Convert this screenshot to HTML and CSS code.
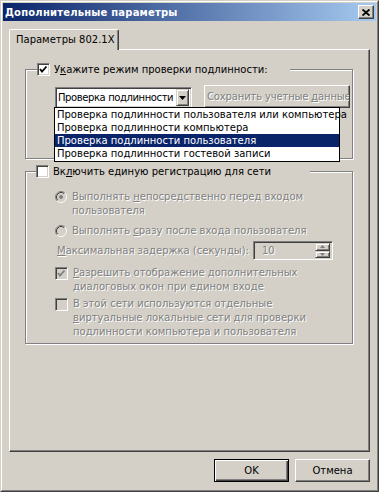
FILE: index.html
```html
<!DOCTYPE html>
<html lang="ru">
<head>
  <meta charset="UTF-8">
  <meta name="viewport" content="width=device-width, initial-scale=1.0">
  <title>Дополнительные параметры</title>
  <link rel="stylesheet" href="styles.css">
</head>
<body>

<div class="window">
  <div class="window-inner">
    <div class="titlebar">
      <span class="title">Дополнительные параметры</span>
      <span class="close-btn">
        <svg width="8" height="7" viewBox="0 0 8 7"><path d="M0.5 0.5L7.5 6.5M7.5 0.5L0.5 6.5" stroke="#000" stroke-width="1.8"/></svg>
      </span>
    </div>

    <div class="tabs">
      <div class="tab active">Параметры 802.1X</div>
    </div>

    <div class="panel">
      <fieldset class="group group-auth">
        <legend class="legend-auth">
          <span class="cb">
            <svg width="9" height="9" viewBox="0 0 9 9"><polyline points="1,4 3,6.5 7.5,1.5" fill="none" stroke="#000" stroke-width="1.8"/></svg>
          </span>
          <span>У<u>к</u>ажите режим проверки подлинности:</span>
        </legend>
        <div class="auth-row">
          <div class="combo">
            <span class="combo-text">Проверка подлинности</span>
            <span class="combo-btn">
              <svg width="7" height="4" viewBox="0 0 7 4"><path d="M0 0H7L3.5 4Z" fill="#000"/></svg>
            </span>
            <ul class="dropdown">
              <li>Проверка подлинности пользователя или компьютера</li>
              <li>Проверка подлинности компьютера</li>
              <li class="selected">Проверка подлинности пользователя</li>
              <li>Проверка подлинности гостевой записи</li>
            </ul>
          </div>
          <span class="btn btn-save disabled"><span>Сохранить учетные <u>д</u>анные</span></span>
        </div>
      </fieldset>

      <fieldset class="group group-sso">
        <legend class="legend-sso">
          <span class="cb"></span>
          <span>Вк<u>л</u>ючить единую регистрацию для сети</span>
        </legend>

        <div class="option opt-radio1 disabled">
          <span class="radio">
            <svg width="12" height="12" viewBox="0 0 12 12">
              <circle cx="6" cy="6" r="5" fill="#d4d0c8"/>
              <path d="M2.11 9.89A5.5 5.5 0 0 1 9.89 2.11" fill="none" stroke="#808080"/>
              <path d="M9.89 2.11A5.5 5.5 0 0 1 2.11 9.89" fill="none" stroke="#fff"/>
              <path d="M2.82 9.18A4.5 4.5 0 0 1 9.18 2.82" fill="none" stroke="#404040"/>
              <path d="M9.18 2.82A4.5 4.5 0 0 1 2.82 9.18" fill="none" stroke="#d4d0c8"/>
              <circle cx="6" cy="6" r="2" fill="#808080"/>
            </svg>
          </span>
          <span class="option-text">Выполнять <u>н</u>епосредственно перед входом<br>пользователя</span>
        </div>

        <div class="option opt-radio2 disabled">
          <span class="radio">
            <svg width="12" height="12" viewBox="0 0 12 12">
              <circle cx="6" cy="6" r="5" fill="#d4d0c8"/>
              <path d="M2.11 9.89A5.5 5.5 0 0 1 9.89 2.11" fill="none" stroke="#808080"/>
              <path d="M9.89 2.11A5.5 5.5 0 0 1 2.11 9.89" fill="none" stroke="#fff"/>
              <path d="M2.82 9.18A4.5 4.5 0 0 1 9.18 2.82" fill="none" stroke="#404040"/>
              <path d="M9.18 2.82A4.5 4.5 0 0 1 2.82 9.18" fill="none" stroke="#d4d0c8"/>
            </svg>
          </span>
          <span class="option-text">Выполнять <u>с</u>разу после входа пользователя</span>
        </div>

        <div class="delay-row disabled">
          <span class="delay-label"><u>М</u>аксимальная задержка (секунды):</span>
          <div class="spin">
            <span class="spin-value">10</span>
            <span class="spin-btns">
              <span class="spin-btn"><svg width="5" height="3" viewBox="0 0 5 3"><path d="M2.5 0L5 3H0Z" fill="#808080"/></svg></span>
              <span class="spin-btn"><svg width="5" height="3" viewBox="0 0 5 3"><path d="M0 0H5L2.5 3Z" fill="#808080"/></svg></span>
            </span>
          </div>
        </div>

        <div class="option opt-check3 disabled">
          <span class="cb cb-disabled">
            <svg width="9" height="9" viewBox="0 0 9 9"><polyline points="1,4 3,6.5 7.5,1.5" fill="none" stroke="#808080" stroke-width="1.8"/></svg>
          </span>
          <span class="option-text"><u>Р</u>азрешить отображение дополнительных<br>диалоговых окон при едином входе</span>
        </div>

        <div class="option opt-check4 disabled">
          <span class="cb cb-disabled"></span>
          <span class="option-text">В этой сети используются отдельные<br><u>в</u>иртуальные локальные сети для проверки<br>подлинности компьютера и пользователя</span>
        </div>
      </fieldset>
    </div>

    <div class="buttons">
      <span class="btn btn-default">OK</span>
      <span class="btn">Отмена</span>
    </div>
  </div>
</div>

</body>
</html>
```

FILE: styles.css
```css
body {
  margin: 0;
  background: #d4d0c8;
  font-family: "DejaVu Sans", sans-serif;
  font-size: 10px;
  color: #000;
}
.window {
  width: 379px;
  height: 492px;
  box-sizing: border-box;
  border: 1px solid;
  border-color: #d4d0c8 #404040 #404040 #d4d0c8;
  background: #d4d0c8;
}
.window-inner {
  height: 100%;
  box-sizing: border-box;
  border: 1px solid;
  border-color: #fff #808080 #808080 #fff;
  padding: 1px;
  display: flex;
  flex-direction: column;
}
.titlebar {
  height: 18px;
  flex: none;
  background: linear-gradient(to right, #0a246a, #a6caf0);
  display: flex;
  align-items: center;
  justify-content: space-between;
  padding: 0 2px 0 2px;
}
.title {
  color: #fff;
  font-weight: bold;
  font-size: 10px;
  letter-spacing: 0.2px;
}
.close-btn {
  width: 16px;
  height: 14px;
  box-sizing: border-box;
  border: 1px solid;
  border-color: #fff #404040 #404040 #fff;
  box-shadow: inset -1px -1px #808080;
  background: #d4d0c8;
  display: flex;
  align-items: center;
  justify-content: center;
}
.tabs {
  display: flex;
  margin: 8px 6px 0;
}
.tab {
  position: relative;
  z-index: 1;
  width: 110px;
  height: 21px;
  margin-bottom: -1px;
  box-sizing: border-box;
  padding: 4px 0 0 6px;
  border: 1px solid;
  border-bottom: none;
  border-color: #fff #404040 #fff #fff;
  border-radius: 2px 2px 0 0;
  box-shadow: inset -1px 0 #808080;
  background: #d4d0c8;
}
.panel {
  margin: 0 6px;
  height: 403px;
  flex: none;
  box-sizing: border-box;
  border: 1px solid;
  border-color: #fff #404040 #404040 #fff;
  box-shadow: inset -1px -1px #808080;
  padding: 12px 0 0 15px;
}
.group {
  margin: 0;
  padding: 0 0 0 29px;
  width: 328px;
  box-sizing: border-box;
  border: 1px solid #808080;
  box-shadow: 1px 1px 0 #fff, inset 1px 1px 0 #fff;
}
.group legend {
  display: flex;
  align-items: center;
  gap: 4px;
  height: 14px;
  padding: 0;
  background: #d4d0c8;
}
.legend-auth {
  width: 253px;
  margin-left: -18px;
}
.legend-sso {
  width: 274px;
  margin-left: -19px;
}
.group-auth {
  padding-bottom: 50px;
}
.group-sso {
  margin-top: 5px;
  padding-bottom: 4px;
}
.cb {
  width: 13px;
  height: 13px;
  flex: none;
  box-sizing: border-box;
  border: 1px solid;
  border-color: #808080 #fff #fff #808080;
  box-shadow: inset 1px 1px #404040, inset -1px -1px #d4d0c8;
  background: #fff;
  display: flex;
  align-items: center;
  justify-content: center;
}
.cb-disabled {
  background: #d4d0c8;
}
.auth-row {
  display: flex;
  align-items: flex-end;
  gap: 12px;
  margin-top: 9px;
}
.combo {
  position: relative;
  width: 137px;
  height: 21px;
  box-sizing: border-box;
  border: 1px solid;
  border-color: #808080 #fff #fff #808080;
  box-shadow: inset 1px 1px #404040, inset -1px -1px #d4d0c8;
  background: #fff;
  display: flex;
  align-items: center;
  padding: 2px;
}
.combo-text {
  flex: 1;
  overflow: hidden;
  white-space: nowrap;
  letter-spacing: -0.4px;
}
.combo-btn {
  width: 13px;
  height: 17px;
  flex: none;
  box-sizing: border-box;
  border: 1px solid;
  border-color: #d4d0c8 #404040 #404040 #d4d0c8;
  box-shadow: inset 1px 1px #fff, inset -1px -1px #808080;
  background: #d4d0c8;
  display: flex;
  align-items: center;
  justify-content: center;
}
.dropdown {
  position: absolute;
  z-index: 2;
  left: -2px;
  top: 19px;
  width: 286px;
  margin: 0;
  padding: 0;
  list-style: none;
  box-sizing: border-box;
  border: 1px solid #000;
  background: #fff;
}
.dropdown li {
  height: 13px;
  line-height: 13px;
  padding-left: 2px;
  white-space: nowrap;
}
.dropdown li:last-child {
  height: 14px;
}
.dropdown li.selected {
  background: #0a246a;
  color: #fff;
}
.btn {
  width: 75px;
  height: 23px;
  flex: none;
  box-sizing: border-box;
  border: 1px solid;
  border-color: #fff #404040 #404040 #fff;
  box-shadow: inset -1px -1px #808080;
  background: #d4d0c8;
  display: flex;
  align-items: center;
  justify-content: center;
  white-space: nowrap;
}
.btn-save {
  width: 146px;
  justify-content: flex-start;
  padding-left: 2px;
  overflow: hidden;
  letter-spacing: -0.15px;
}
.btn-default {
  border-color: #000;
  box-shadow: inset 1px 1px #fff, inset -1px -1px #404040, inset -2px -2px #808080;
}
.disabled,
.disabled .option-text {
  color: #808080;
  text-shadow: 1px 1px 0 #fff;
}
.option {
  display: flex;
  align-items: flex-start;
  gap: 5px;
  line-height: 14px;
}
.radio {
  width: 12px;
  height: 12px;
  margin-top: 1px;
  flex: none;
  display: flex;
}
.option .cb {
  margin-top: 1px;
}
.opt-radio1 {
  margin-top: 12px;
}
.opt-radio2 {
  margin-top: 6px;
}
.delay-row {
  display: flex;
  align-items: center;
  margin: 3px 0 0 2px;
}
.delay-label {
  width: 196px;
}
.spin {
  width: 80px;
  height: 19px;
  box-sizing: border-box;
  border: 1px solid;
  border-color: #808080 #fff #fff #808080;
  box-shadow: inset 1px 1px #404040, inset -1px -1px #d4d0c8;
  display: flex;
  align-items: center;
  padding: 2px 2px 2px 8px;
}
.spin-value {
  flex: 1;
}
.spin-btns {
  display: flex;
  flex-direction: column;
  width: 15px;
  height: 15px;
}
.spin-btn {
  flex: 1;
  box-sizing: border-box;
  border: 1px solid;
  border-color: #d4d0c8 #404040 #404040 #d4d0c8;
  box-shadow: inset 1px 1px #fff, inset -1px -1px #808080;
  display: flex;
  align-items: center;
  justify-content: center;
}
.opt-check3 {
  margin-top: 6px;
}
.opt-check4 {
  margin-top: 3px;
}
.buttons {
  display: flex;
  justify-content: flex-end;
  gap: 6px;
  margin: 7px 6px 0;
}
```
